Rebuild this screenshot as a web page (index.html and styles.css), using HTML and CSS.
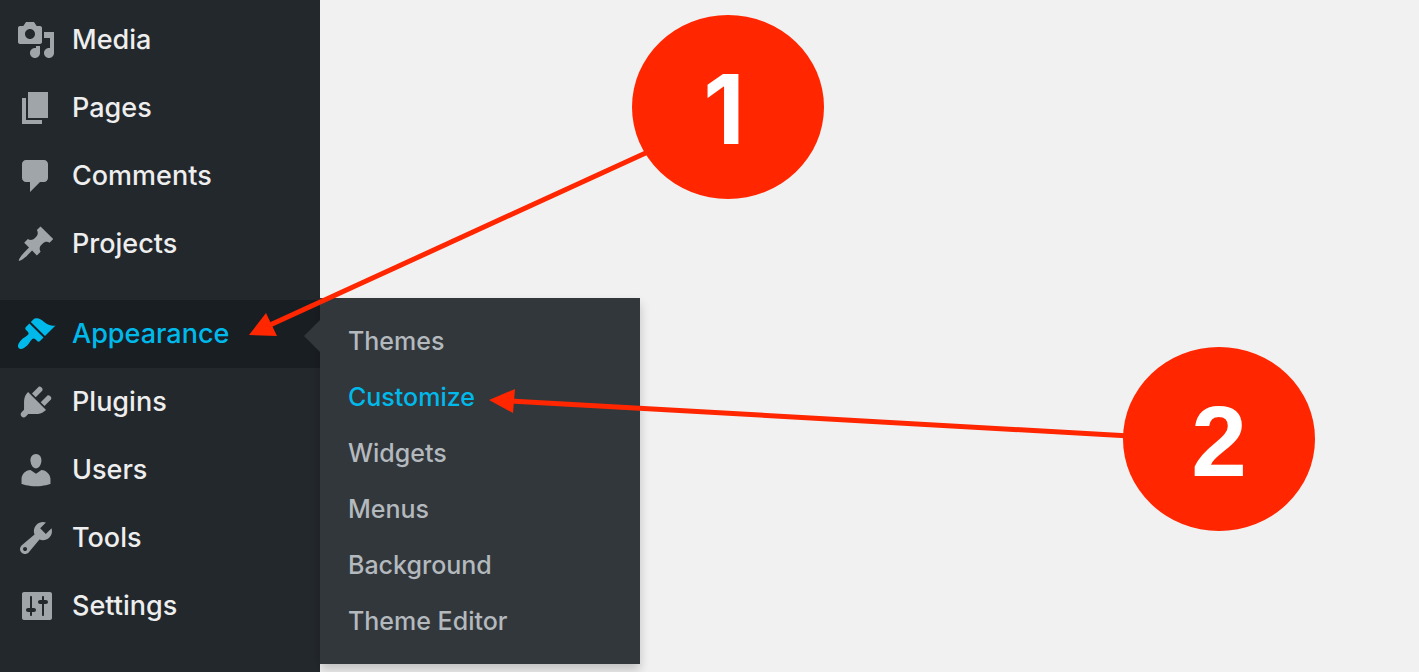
FILE: index.html
```html
<!DOCTYPE html>
<html lang="en">
<head>
<meta charset="utf-8">
<title>Appearance – Customize</title>
<link rel="stylesheet" href="styles.css">
</head>
<body>
<nav class="sidebar" aria-label="Main menu">
  <ul class="menu">
    <li class="menu-item"><a class="menu-link" href="#"><svg class="icon" viewBox="0 0 20 20" aria-hidden="true"><path d="M13 11V4c0-.55-.45-1-1-1h-1.67L9 1H5L3.67 3H2c-.55 0-1 .45-1 1v7c0 .55.45 1 1 1h10c.55 0 1-.45 1-1zM7 4.5c1.38 0 2.5 1.12 2.5 2.5S8.38 9.5 7 9.5 4.5 8.38 4.5 7 5.62 4.5 7 4.5zM14 6h5v10.5c0 1.38-1.12 2.5-2.5 2.5S14 17.88 14 16.5s1.12-2.5 2.5-2.5c.17 0 .34.02.5.05V9h-3V6zm-4 8.05V13h2v3.5c0 1.38-1.12 2.5-2.5 2.5S7 17.88 7 16.5 8.12 14 9.5 14c.17 0 .34.02.5.05z"/></svg>Media</a></li>
    <li class="menu-item"><a class="menu-link" href="#"><svg class="icon" viewBox="0 0 20 20" aria-hidden="true"><path d="M6 15V2h10v13H6zm-1 1h8v2H3V5h2v11z"/></svg>Pages</a></li>
    <li class="menu-item"><a class="menu-link" href="#"><svg class="icon" viewBox="0 0 20 20" aria-hidden="true"><path d="M5 2h9c1.1 0 2 .9 2 2v7c0 1.1-.9 2-2 2h-2l-5 5v-5H5c-1.1 0-2-.9-2-2V4c0-1.1.9-2 2-2z"/></svg>Comments</a></li>
    <li class="menu-item"><a class="menu-link" href="#"><svg class="icon" viewBox="0 0 20 20" aria-hidden="true"><path d="M10.44 3.02l1.82-1.82 6.36 6.35-1.83 1.82c-1.05-.68-2.48-.57-3.41.36l-.75.75c-.92.93-1.04 2.35-.35 3.41l-1.83 1.82-2.41-2.41-2.8 2.79c-.42.42-3.38 2.71-3.8 2.29s1.86-3.39 2.28-3.81l2.79-2.79L4.1 9.36l1.83-1.82c1.05.69 2.48.57 3.4-.36l.75-.75c.93-.92 1.05-2.35.36-3.41z"/></svg>Projects</a></li>
    <li class="menu-item menu-item-open">
      <a class="menu-link" href="#" aria-expanded="true"><svg class="icon" viewBox="0 0 20 20" aria-hidden="true"><path d="M14.48 11.06L7.41 3.99l1.5-1.5c.5-.56 2.3-.47 3.51.32 1.21.8 1.43 1.28 2.91 2.1 1.18.64 2.45 1.26 4.45.85zm-.71.71L6.7 4.7 4.93 6.47c-.39.39-.39 1.02 0 1.41l1.06 1.06c.39.39.39 1.03 0 1.42-.6.6-1.43 1.11-2.21 1.69-.35.26-.7.53-1.01.84C1.43 14.23.4 16.08 1.4 17.07c.99 1 2.84-.03 4.18-1.36.31-.31.58-.66.85-1.02.57-.78 1.08-1.61 1.69-2.21.39-.39 1.02-.39 1.41 0l1.06 1.06c.39.39 1.02.39 1.41 0z"/></svg>Appearance</a>
      <ul class="submenu">
        <li><a class="submenu-link" href="#">Themes</a></li>
        <li><a class="submenu-link submenu-link-current" href="#">Customize</a></li>
        <li><a class="submenu-link" href="#">Widgets</a></li>
        <li><a class="submenu-link" href="#">Menus</a></li>
        <li><a class="submenu-link" href="#">Background</a></li>
        <li><a class="submenu-link" href="#">Theme Editor</a></li>
      </ul>
    </li>
    <li class="menu-item"><a class="menu-link" href="#"><svg class="icon" viewBox="0 0 20 20" aria-hidden="true"><path d="M13.11 4.36L9.87 7.6 8 5.73l3.24-3.24c.35-.34 1.05-.2 1.56.32.52.51.66 1.21.31 1.55zm-8 1.77l.91-1.12 9.01 9.01-1.19.84c-.71.71-2.63 1.16-3.82 1.16H6.14L4.9 17.26c-.59.59-1.54.59-2.12 0-.59-.58-.59-1.53 0-2.12l1.24-1.24v-3.88c0-1.13.4-3.19 1.09-3.89zm7.26 3.97l3.24-3.24c.34-.35 1.04-.21 1.55.31.52.51.66 1.21.31 1.55l-3.24 3.25z"/></svg>Plugins</a></li>
    <li class="menu-item"><a class="menu-link" href="#"><svg class="icon" viewBox="0 0 20 20" aria-hidden="true"><path d="M10 9.25c-2.27 0-2.73-3.44-2.73-3.44C7 4.02 7.82 2 9.97 2c2.16 0 2.98 2.02 2.71 3.81 0 0-.41 3.44-2.68 3.44zm0 2.57L12.72 10c2.39 0 4.52 2.33 4.52 4.53v2.49s-3.65 1.13-7.24 1.13c-3.65 0-7.24-1.13-7.24-1.13v-2.49c0-2.25 1.94-4.48 4.47-4.48z"/></svg>Users</a></li>
    <li class="menu-item"><a class="menu-link" href="#"><svg class="icon" viewBox="0 0 20 20" aria-hidden="true"><path d="M16.68 9.77c-1.34 1.34-3.3 1.67-4.95.99l-5.41 6.52c-.99.99-2.59.99-3.58 0s-.99-2.59 0-3.57l6.52-5.42c-.68-1.65-.35-3.61.99-4.95 1.28-1.28 3.12-1.62 4.72-1.06l-2.89 2.89 2.82 2.82 2.86-2.87c.53 1.58.18 3.39-1.08 4.65zM3.81 16.21c.4.39 1.04.39 1.43 0 .4-.4.4-1.04 0-1.43-.39-.4-1.03-.4-1.43 0-.39.39-.39 1.03 0 1.43z"/></svg>Tools</a></li>
    <li class="menu-item"><a class="menu-link" href="#"><svg class="icon" viewBox="0 0 20 20" aria-hidden="true"><path d="M18 16V4c0-.55-.45-1-1-1H4c-.55 0-1 .45-1 1v12c0 .55.45 1 1 1h13c.55 0 1-.45 1-1zM8 11h1c.55 0 1 .45 1 1s-.45 1-1 1H8v1.5c0 .28-.22.5-.5.5s-.5-.22-.5-.5V13H6c-.55 0-1-.45-1-1s.45-1 1-1h1V5.5c0-.28.22-.5.5-.5s.5.22.5.5V11zm5-2h-1c-.55 0-1-.45-1-1s.45-1 1-1h1V5.5c0-.28.22-.5.5-.5s.5.22.5.5V7h1c.55 0 1 .45 1 1s-.45 1-1 1h-1v5.5c0 .28-.22.5-.5.5s-.5-.22-.5-.5V9z"/></svg>Settings</a></li>
  </ul>
</nav>
<svg class="callouts" width="1419" height="672" viewBox="0 0 1419 672">
  <g class="callout-arrow">
    <path class="callout-line" d="M650 151L270 325"/>
    <path d="M249 335L266 313L277 336Z"/>
    <path class="callout-line" d="M1130 436L510 401"/>
    <path d="M489 400L515 389L513 413Z"/>
  </g>
  <ellipse class="callout-disc" cx="728" cy="107" rx="96" ry="92"/>
  <text class="callout-number callout-number-plain" x="724" y="144">1</text>
  <ellipse class="callout-disc" cx="1219" cy="439" rx="96" ry="92"/>
  <text class="callout-number" x="1219" y="476">2</text>
</svg>
</body>
</html>
```
FILE: styles.css
```css
* {
  box-sizing: border-box;
}

body {
  margin: 0;
  min-height: 100vh;
  display: flex;
  position: relative;
  overflow: hidden;
  background: #f1f1f1;
  font-family: Inter, "Liberation Sans", sans-serif;
  font-weight: 500;
}

ul {
  margin: 0;
  padding: 0;
  list-style: none;
}

a {
  text-decoration: none;
}

.sidebar {
  flex: none;
  width: 320px;
  background: #23282d;
}

.menu {
  padding-top: 6px;
}

.menu-link {
  display: flex;
  align-items: center;
  gap: 16px;
  height: 68px;
  padding: 0 16px;
  color: #eee;
  font-size: 27px;
  line-height: 36px;
}

.icon {
  flex: none;
  width: 40px;
  height: 40px;
  fill: #a0a5aa;
}

.menu-item-open {
  position: relative;
  margin-top: 22px;
  background: #191e23;
}

.menu-item-open .menu-link {
  color: #00b9eb;
}

.menu-item-open .icon {
  fill: #00b9eb;
}

.menu-item-open::after {
  content: "";
  position: absolute;
  top: 20px;
  right: 0;
  border: 16px solid transparent;
  border-left-width: 0;
  border-right-color: #32373c;
}

.submenu {
  position: absolute;
  top: -2px;
  left: 100%;
  width: 320px;
  padding: 15px 0;
  background: #32373c;
  box-shadow: 0 6px 10px rgba(0, 0, 0, 0.2);
}

.submenu-link {
  display: flex;
  align-items: center;
  height: 56px;
  padding: 0 28px;
  color: #b4b9be;
  font-size: 25px;
  line-height: 36px;
}

.submenu-link-current {
  color: #00b9eb;
}

.callouts {
  position: absolute;
  top: 0;
  left: 0;
  pointer-events: none;
}

.callout-arrow,
.callout-disc {
  fill: #ff2600;
}

.callout-line {
  stroke: #ff2600;
  stroke-width: 5;
}

.callout-number {
  fill: #fff;
  font: bold 100px "Liberation Sans", Arial, sans-serif;
  text-anchor: middle;
}

.callout-number-plain {
  font: bold 96px Inter, "Liberation Sans", sans-serif;
}
```
